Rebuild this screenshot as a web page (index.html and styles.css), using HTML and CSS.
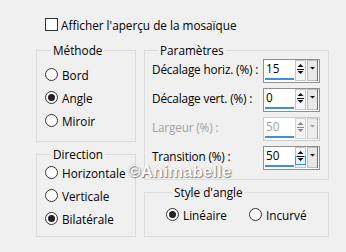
FILE: index.html
```html
<!DOCTYPE html>
<html lang="fr">
<head>
    <meta charset="UTF-8">
    <title>Mosaïque</title>
    <link rel="stylesheet" href="styles.css">
</head>
<body>
    <div class="dialog">
        <div class="preview"><span class="check"></span>Afficher l'aperçu de la mosaïque</div>

        <div class="columns">
            <div class="col-left">
                <div class="group group-method">
                    <div class="group-title">Méthode</div>
                    <div class="options">
                        <div class="option"><span class="radio"></span>Bord</div>
                        <div class="option"><span class="radio checked"></span>Angle</div>
                        <div class="option"><span class="radio"></span>Miroir</div>
                    </div>
                </div>
                <div class="group group-direction">
                    <div class="group-title">Direction</div>
                    <div class="options">
                        <div class="option"><span class="radio"></span>Horizontale</div>
                        <div class="option"><span class="radio"></span>Verticale</div>
                        <div class="option"><span class="radio checked"></span>Bilatérale</div>
                    </div>
                </div>
            </div>

            <div class="col-right">
                <div class="group group-params">
                    <div class="group-title">Paramètres</div>
                    <div class="fields">
                        <div class="field">
                            <span class="field-label">Décalage horiz. (%) :</span>
                            <div class="spin">
                                <div class="spin-field"><div class="spin-value">15</div><div class="spin-bar"></div></div>
                                <svg class="spin-arrows" width="11" height="21" viewBox="0 0 11 21"><rect x="0.5" y="0.5" width="10" height="20" fill="#f7f7f7" stroke="#c4c4c4"/><path d="M2.5 7h6l-3-3z" fill="#111"/><path d="M2 9.5h7" stroke="#111"/><path d="M2.5 11h6l-3 3z" fill="#111"/></svg>
                                <svg class="spin-drop" width="11" height="21" viewBox="0 0 11 21"><rect x="0.5" y="0.5" width="10" height="20" fill="#e8e8e8" stroke="#bdbdbd"/><path d="M10.5 0v21" stroke="#6e6e6e"/><path d="M3 7h5l-2.5 2.5z" fill="#111"/></svg>
                            </div>
                        </div>
                        <div class="field">
                            <span class="field-label">Décalage vert. (%) :</span>
                            <div class="spin">
                                <div class="spin-field"><div class="spin-value">0</div><div class="spin-bar"></div></div>
                                <svg class="spin-arrows" width="11" height="21" viewBox="0 0 11 21"><rect x="0.5" y="0.5" width="10" height="20" fill="#f7f7f7" stroke="#c4c4c4"/><path d="M2.5 7h6l-3-3z" fill="#111"/><path d="M2 9.5h7" stroke="#111"/><path d="M2.5 11h6l-3 3z" fill="#111"/></svg>
                                <svg class="spin-drop" width="11" height="21" viewBox="0 0 11 21"><rect x="0.5" y="0.5" width="10" height="20" fill="#e8e8e8" stroke="#bdbdbd"/><path d="M10.5 0v21" stroke="#6e6e6e"/><path d="M3 7h5l-2.5 2.5z" fill="#111"/></svg>
                            </div>
                        </div>
                        <div class="field disabled">
                            <span class="field-label">Largeur (%) :</span>
                            <div class="spin">
                                <div class="spin-field"><div class="spin-value">50</div><div class="spin-bar"></div></div>
                                <svg class="spin-arrows" width="11" height="21" viewBox="0 0 11 21"><rect x="0.5" y="0.5" width="10" height="20" fill="#f4f4f4" stroke="#d4d4d4"/><path d="M2.5 7h6l-3-3z" fill="#8a8a8a"/><path d="M2 9.5h7" stroke="#8a8a8a"/><path d="M2.5 11h6l-3 3z" fill="#8a8a8a"/></svg>
                                <svg class="spin-drop" width="11" height="21" viewBox="0 0 11 21"><rect x="0.5" y="0.5" width="10" height="20" fill="#ececec" stroke="#d0d0d0"/><path d="M10.5 0v21" stroke="#a8a8a8"/><path d="M3 7h5l-2.5 2.5z" fill="#a0a0a0"/></svg>
                            </div>
                        </div>
                        <div class="field">
                            <span class="field-label">Transition (%) :</span>
                            <div class="spin">
                                <div class="spin-field"><div class="spin-value">50</div><div class="spin-bar"></div></div>
                                <svg class="spin-arrows" width="11" height="21" viewBox="0 0 11 21"><rect x="0.5" y="0.5" width="10" height="20" fill="#f7f7f7" stroke="#c4c4c4"/><rect x="0.5" y="9.5" width="10" height="8" fill="#e5f1fb" stroke="#3c8fe3"/><path d="M2.5 7h6l-3-3z" fill="#111"/><path d="M2 9.5h7" stroke="#111"/><path d="M2.5 11h6l-3 3z" fill="#111"/></svg>
                                <svg class="spin-drop" width="11" height="21" viewBox="0 0 11 21"><rect x="0.5" y="0.5" width="10" height="20" fill="#e8e8e8" stroke="#bdbdbd"/><path d="M10.5 0v21" stroke="#6e6e6e"/><path d="M3 7h5l-2.5 2.5z" fill="#111"/></svg>
                            </div>
                        </div>
                    </div>
                </div>
                <div class="group group-style">
                    <div class="group-title">Style d'angle</div>
                    <div class="inline-options">
                        <div class="option option-wide"><span class="radio checked"></span>Linéaire</div>
                        <div class="option"><span class="radio"></span>Incurvé</div>
                    </div>
                </div>
            </div>
        </div>

        <div class="watermark">©Animabelle</div>
    </div>
</body>
</html>
```

FILE: styles.css
```css
body {
    margin: 0;
    background-color: #f0f0f0;
    font-family: "Open Sans", "Noto Sans", sans-serif;
    font-size: 11.75px;
    line-height: 16px;
    color: #000;
}
.dialog {
    position: relative;
    width: 346px;
    height: 252px;
    padding: 18px 0 0 36px;
    box-sizing: border-box;
}
.preview {
    display: flex;
    align-items: center;
    gap: 3px;
    height: 13px;
    margin-left: 9px;
}
.check {
    width: 13px;
    height: 13px;
    box-sizing: border-box;
    border: 1px solid #333;
    background-color: #fff;
}
.columns {
    display: flex;
    gap: 8px;
    margin-top: 19px;
}
.col-left {
    width: 100px;
}
.col-right {
    width: 185px;
}
.group {
    border: 1px solid #dcdcdc;
    box-sizing: border-box;
}
.group-title {
    width: fit-content;
    margin: -8px 0 0 6px;
    padding: 0 2px;
    background-color: #f0f0f0;
    line-height: 15px;
}
.group-method {
    padding: 0 0 9px 8px;
}
.group-method .options {
    margin-top: 5px;
}
.group-direction {
    margin-top: 12px;
    padding: 0 0 6px 8px;
}
.group-direction .options {
    margin-top: -1px;
}
.option {
    display: flex;
    align-items: center;
    gap: 4px;
    height: 23px;
}
.radio {
    display: flex;
    align-items: center;
    justify-content: center;
    width: 13px;
    height: 13px;
    box-sizing: border-box;
    border: 1px solid #333;
    border-radius: 50%;
    background-color: #fff;
}
.radio.checked::after {
    content: "";
    width: 7px;
    height: 7px;
    border-radius: 50%;
    background-color: #222;
}
.group-params {
    padding: 0 8px 9px 7px;
}
.fields {
    display: flex;
    flex-direction: column;
    gap: 5px;
    margin-top: 1px;
}
.field {
    display: flex;
    justify-content: space-between;
    align-items: flex-start;
    height: 24px;
}
.field-label {
    padding-top: 2px;
    letter-spacing: -0.15px;
}
.spin {
    display: flex;
    align-items: flex-start;
    width: 57px;
    height: 24px;
    box-sizing: border-box;
    border: 1px solid #8f8f8f;
    background-color: #fff;
    padding-right: 1px;
}
.spin-field {
    flex: 1;
    padding-left: 1px;
}
.spin-value {
    padding-left: 1px;
}
.spin-bar {
    width: 29px;
    height: 2px;
    margin-top: 2px;
    background-color: #3c8fe3;
}
.spin-arrows,
.spin-drop {
    display: block;
    flex-shrink: 0;
}
.spin-drop {
    margin-left: 1px;
}
.field.disabled .field-label,
.field.disabled .spin-value {
    color: #a3a3a3;
}
.field.disabled .spin {
    border-color: #cccccc;
}
.group-style {
    margin-top: 12px;
    padding: 0 0 10px 21px;
}
.inline-options {
    display: flex;
    margin-top: 3px;
}
.option-wide {
    width: 83px;
}
.watermark {
    position: absolute;
    left: 128px;
    top: 165px;
    font-family: "Liberation Sans", Arial, sans-serif;
    font-weight: bold;
    font-size: 17px;
    line-height: 14px;
    color: #fff;
    text-shadow: 1px 1px 1px rgba(0, 0, 0, 0.45), 0 0 1px rgba(0, 0, 0, 0.35);
}
```
